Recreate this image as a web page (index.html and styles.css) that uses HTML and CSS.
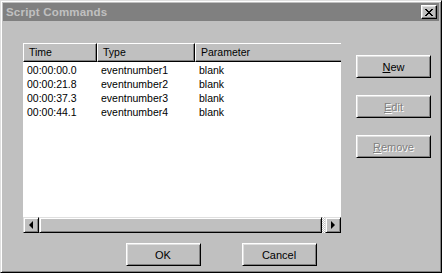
FILE: index.html
```html
<html lang="en">

<head>
    <meta charset="UTF-8">
    <title>Script Commands</title>
    <link rel="stylesheet" href="styles.css">
</head>

<body>
    <div class="window">
        <div class="titlebar">
            <span class="title">Script Commands</span>
            <button class="close" type="button">
                <svg width="8" height="7" viewBox="0 0 8 7">
                    <path d="M0 0h2v1h1v1h2v-1h1v-1h2v1h-1v1h-1v1h-1v1h1v1h1v1h1v1h-2v-1h-1v-1h-2v1h-1v1h-2v-1h1v-1h1v-1h1v-1h-1v-1h-1v-1h-1z" fill="#000"/>
                </svg>
            </button>
        </div>

        <div class="content">
            <div class="top">
                <div class="listview">
                    <div class="header">
                        <div class="col">Time</div>
                        <div class="col">Type</div>
                        <div class="col">Parameter</div>
                    </div>
                    <div class="rows">
                        <div class="row"><span>00:00:00.0</span><span>eventnumber1</span><span>blank</span></div>
                        <div class="row"><span>00:00:21.8</span><span>eventnumber2</span><span>blank</span></div>
                        <div class="row"><span>00:00:37.3</span><span>eventnumber3</span><span>blank</span></div>
                        <div class="row"><span>00:00:44.1</span><span>eventnumber4</span><span>blank</span></div>
                    </div>
                    <div class="hscroll">
                        <div class="arrow"><span class="tri-left"></span></div>
                        <div class="thumb"></div>
                        <div class="track"></div>
                        <div class="arrow"><span class="tri-right"></span></div>
                    </div>
                </div>

                <div class="side">
                    <button class="btn" type="button"><u>N</u>ew</button>
                    <button class="btn disabled" type="button"><u>E</u>dit</button>
                    <button class="btn disabled" type="button"><u>R</u>emove</button>
                </div>
            </div>

            <div class="footer">
                <button class="btn" type="button">OK</button>
                <button class="btn" type="button">Cancel</button>
            </div>
        </div>
    </div>
</body>

</html>
```

FILE: styles.css
```css
* {
    box-sizing: border-box;
    margin: 0;
    padding: 0;
}

body {
    width: 442px;
    height: 273px;
    font-family: "Liberation Sans", Arial, sans-serif;
    font-size: 11px;
    background: #c0c0c0;
}

.window {
    width: 442px;
    height: 273px;
    background: #c0c0c0;
    border: 1px solid;
    border-color: #dfdfdf #000 #000 #dfdfdf;
    box-shadow: inset 1px 1px #fff, inset -1px -1px #808080;
    padding: 2px;
    display: flex;
    flex-direction: column;
}

.titlebar {
    height: 18px;
    background: #808080;
    display: flex;
    align-items: center;
    justify-content: space-between;
    padding: 0 2px 0 3px;
}

.title {
    color: #c0c0c0;
    font-weight: bold;
    font-size: 11.5px;
    letter-spacing: 0.2px;
}

.close {
    width: 16px;
    height: 14px;
    background: #c0c0c0;
    border: 1px solid;
    border-color: #fff #000 #000 #fff;
    box-shadow: inset -1px -1px #808080, inset 1px 1px #dfdfdf;
    display: grid;
    place-items: center;
}

.close svg {
    display: block;
}

.content {
    padding: 21px 0 0 19px;
}

.top {
    display: flex;
    align-items: flex-start;
}

.listview {
    width: 320px;
    height: 192px;
    background: #fff;
    border: 1px solid #c0c0c0;
    display: flex;
    flex-direction: column;
    font-size: 10.5px;
}

.header {
    display: grid;
    grid-template-columns: 74px 98px 1fr;
    height: 19px;
    flex-shrink: 0;
}

.col {
    background: #c0c0c0;
    border: 1px solid;
    border-color: #fff #000 #000 #fff;
    box-shadow: inset -1px -1px #808080;
    padding: 1px 0 0 5px;
    line-height: 15px;
}

.header .col:last-child {
    border-right: none;
    box-shadow: inset 0 -1px #808080;
}

.rows {
    flex: 1;
    padding-top: 1px;
}

.row {
    display: grid;
    grid-template-columns: 74px 98px 1fr;
    height: 14px;
    line-height: 14px;
}

.row span {
    padding-left: 4px;
}

.hscroll {
    height: 16px;
    display: flex;
    flex-shrink: 0;
}

.arrow {
    width: 16px;
    height: 16px;
    background: #c0c0c0;
    border: 1px solid;
    border-color: #dfdfdf #000 #000 #dfdfdf;
    box-shadow: inset 1px 1px #fff, inset -1px -1px #808080;
    display: grid;
    place-items: center;
}

.tri-left {
    width: 0;
    height: 0;
    border-top: 4px solid transparent;
    border-bottom: 4px solid transparent;
    border-right: 4px solid #000;
}

.tri-right {
    width: 0;
    height: 0;
    border-top: 4px solid transparent;
    border-bottom: 4px solid transparent;
    border-left: 4px solid #000;
}

.thumb {
    flex: 1;
    background: #c0c0c0;
    border: 1px solid;
    border-color: #dfdfdf #000 #000 #dfdfdf;
    box-shadow: inset 1px 1px #fff, inset -1px -1px #808080;
}

.track {
    width: 3px;
    background: repeating-conic-gradient(#fff 0 25%, #c0c0c0 0 50%) 0 0 / 2px 2px;
}

.side {
    display: flex;
    flex-direction: column;
    gap: 17px;
    margin: 13px 0 0 14px;
}

.btn {
    width: 75px;
    height: 23px;
    background: #c0c0c0;
    font-family: "Liberation Sans", Arial, sans-serif;
    font-size: 11px;
    color: #000;
    border: 1px solid;
    border-color: #fff #000 #000 #fff;
    box-shadow: inset 1px 1px #dfdfdf, inset -1px -1px #808080;
}

.btn.disabled {
    color: #808080;
    text-shadow: 1px 1px #fff;
}

.footer {
    display: flex;
    justify-content: center;
    gap: 41px;
    margin: 9px 0 0 -19px;
}
```
